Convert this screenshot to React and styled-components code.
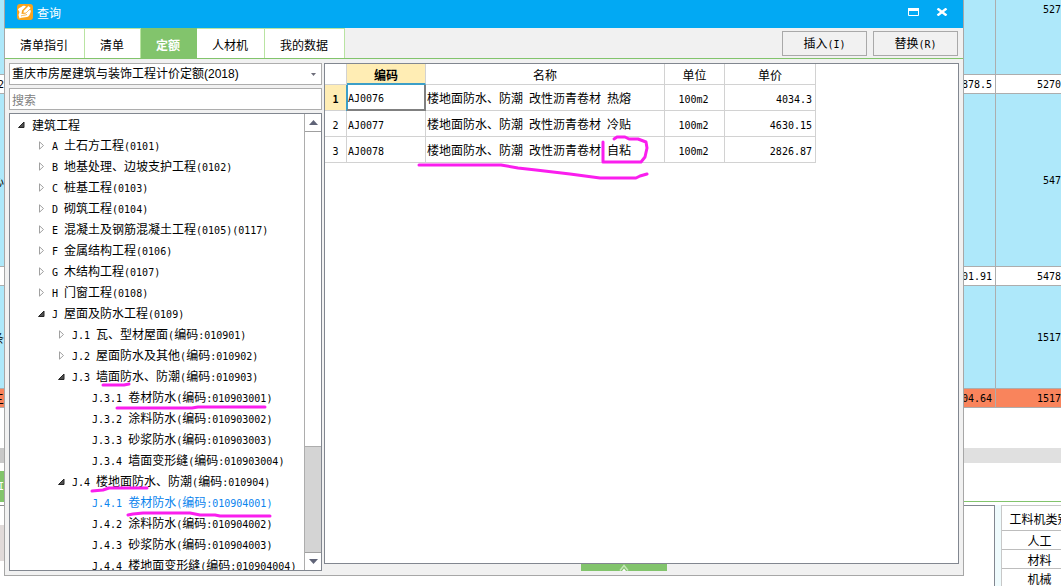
import React from "react";
import styled, { createGlobalStyle, css } from "styled-components";

const CJK = `"Noto Sans CJK SC", sans-serif`;
const HALF = `"DejaVu Sans Mono", "Liberation Mono", monospace`;

const GlobalStyle = createGlobalStyle`
  * { box-sizing: border-box; }
  body { margin: 0; background: #fff; color: #000; font: 12px/16px ${CJK}; }
  button, input, select { font: inherit; color: inherit; }
`;

const Half = styled.span`
  font-family: ${HALF};
  font-size: 10px;
  white-space: pre;
`;

/* Latin letters and digits take half the width of a Chinese character. */
function Text({ children }) {
  return String(children)
    .split(/([\x20-\x7e]+)/)
    .filter(Boolean)
    .map((part, i) => (/^[\x20-\x7e]/.test(part) ? <Half key={i}>{part}</Half> : part));
}

const Page = styled.div`
  position: relative;
  display: grid;
  grid-template-columns: 4px minmax(0, 1fr) 97px;
  height: 100vh;
  overflow: hidden;
`;

/* ---------- worksheet behind the dialog ---------- */

const Side = styled.div`
  display: flex;
  flex-direction: column;
  min-width: 0;
  overflow: hidden;
`;

const Sheet = styled.table`
  width: 100%;
  table-layout: fixed;
  border-collapse: separate;
  border-spacing: 0;
`;

const tones = { blue: "#aee8fa", white: "#fff", orange: "#f9845c" };

const SheetRow = styled.tr`
  height: ${(p) => p.$h}px;
  background: ${(p) => tones[p.$tone]};
`;

const SheetCell = styled.td`
  padding: 2px 0 0;
  border-bottom: 1px solid #adadad;
  vertical-align: ${(p) => (p.$top ? "top" : "middle")};
  &:not(:last-child) { border-right: 1px solid #adadad; }
`;

const Clip = styled.div`
  display: flex;
  justify-content: flex-end;
  padding-right: ${(p) => p.$pad || 0}px;
  overflow: hidden;
  white-space: nowrap;
`;

const Band = styled.div`
  flex: none;
  height: ${(p) => p.$h}px;
  background: ${(p) => p.$color || "#fff"};
`;

const GreenTag = styled(Band)`
  display: flex;
  align-items: center;
  justify-content: flex-end;
  color: #fff;
  overflow: hidden;
`;

const Lower = styled.div`
  flex: 1;
  display: grid;
  grid-template-columns: 31px minmax(0, 1fr);
  gap: 6px;
  margin-top: 3px;
  background: #effbfd;
`;

const LowerPane = styled.div`
  border-top: 1px solid #828790;
  border-right: 1px solid #828790;
  background: #fff;
`;

const KindTable = styled.table`
  align-self: start;
  width: 76px;
  border-collapse: separate;
  border-spacing: 0;
  background: #fff;
  border-left: 1px solid #c8c8c8;
  border-top: 1px solid #c8c8c8;
  th, td {
    height: 19px;
    padding: 2px 0 0;
    text-align: center;
    font-weight: 400;
    white-space: nowrap;
    border-bottom: 1px solid #bdbdbd;
  }
  th { height: 25px; }
`;

const rows = [
  { h: 75, tone: "blue", a: "", b: "527", left: "", top: true },
  { h: 19, tone: "white", a: "878.5", b: "5270", left: "2" },
  { h: 173, tone: "blue", a: "", b: "547", left: "心" },
  { h: 19, tone: "white", a: "01.91", b: "5478", left: "" },
  { h: 103, tone: "blue", a: "", b: "1517", left: "条" },
  { h: 19, tone: "orange", a: "04.64", b: "1517", left: "三" },
];

function LeftSheet() {
  return (
    <Side>
      <Sheet>
        <tbody>
          {rows.map((r, i) => (
            <SheetRow key={i} $h={r.h} $tone={r.tone}>
              <SheetCell><Clip><Text>{r.left}</Text></Clip></SheetCell>
            </SheetRow>
          ))}
        </tbody>
      </Sheet>
      <Band $h={40} />
      <Band $h={15} $color="#c8c8c8" />
      <Band $h={8} />
      <GreenTag $h={31} $color="#82c46c"><Text>I</Text></GreenTag>
      <Band $h={3} />
      <Band $h={1} $color="#8c8c8c" />
      <Band $h={19} />
      <Band $h={36} $color="#e0dad9" />
    </Side>
  );
}

function RightSheet() {
  return (
    <Side>
      <Sheet>
        <colgroup><col style={{ width: 32 }} /><col /></colgroup>
        <tbody>
          {rows.map((r, i) => (
            <SheetRow key={i} $h={r.h} $tone={r.tone}>
              <SheetCell $top={r.top}><Clip $pad={3}><Text>{r.a}</Text></Clip></SheetCell>
              <SheetCell $top={r.top}><Clip><Text>{r.b}</Text></Clip></SheetCell>
            </SheetRow>
          ))}
        </tbody>
      </Sheet>
      <Band $h={40} />
      <Band $h={15} $color="#e0e0e0" />
      <Band $h={38} />
      <Band $h={1} $color="#82c46c" />
      <Lower>
        <LowerPane />
        <KindTable>
          <thead><tr><th>工料机类别</th></tr></thead>
          <tbody>
            <tr><td>人工</td></tr>
            <tr><td>材料</td></tr>
            <tr><td>机械</td></tr>
          </tbody>
        </KindTable>
      </Lower>
    </Side>
  );
}

/* ---------- dialog ---------- */

const Dialog = styled.section`
  display: flex;
  flex-direction: column;
  height: calc(100vh - 10px);
  min-width: 0;
  border: 1px solid #a7a7a7;
  border-top: 0;
  background: #f1f1f1;
`;

const TitleBar = styled.header`
  flex: none;
  display: flex;
  align-items: center;
  height: 28px;
  padding: 0 15px 4px 12px;
  background: #02a9f3;
  color: #fff;
`;

const Title = styled.h1`
  flex: 1;
  margin: 0 0 0 4px;
  padding-top: 2px;
  font-size: 12px;
  font-weight: 400;
`;

const TitleButton = styled.button`
  display: flex;
  margin-left: 17px;
  padding: 0;
  border: 0;
  background: none;
`;

const TabBar = styled.div`
  flex: none;
  display: flex;
  align-items: center;
  height: 31px;
  padding-right: 5px;
  border-bottom: 1px solid #82c46c;
`;

const Tabs = styled.nav`
  display: flex;
  flex: 1;
  align-self: stretch;
`;

const Tab = styled.button`
  padding: 2px 16px 0 15px;
  border: 0;
  border-top: 1px solid #b9e4a2;
  border-right: 1px solid #b9e4a2;
  background: #fff;
  ${(p) => p.$active && css`
    background: #82c46c;
    border-color: #82c46c;
    color: #fff;
    font-weight: 700;
  `}
`;

const ActionButton = styled.button`
  width: 85px;
  height: 25px;
  margin-left: 6px;
  padding: 2px 0 0;
  border: 1px solid #a9a9a9;
  background: #f1f1f1;
`;

const Body = styled.div`
  flex: 1;
  display: grid;
  grid-template-columns: 313px minmax(0, 1fr);
  gap: 2px;
  min-height: 0;
  padding: 4px;
`;

const LeftPane = styled.div`
  display: flex;
  flex-direction: column;
  gap: 3px;
  min-height: 0;
`;

const ComboBox = styled.label`
  flex: none;
  display: flex;
  align-items: center;
  height: 22px;
  padding-right: 5px;
  border: 1px solid #adadad;
  background: #fff;
`;

const Combo = styled.select`
  flex: 1;
  min-width: 0;
  height: 20px;
  padding: 0 2px;
  border: 0;
  appearance: none;
  background: none;
  font-family: "Liberation Sans", ${CJK};
`;

const Search = styled.input`
  flex: none;
  height: 22px;
  padding: 0 2px;
  border: 1px solid #adadad;
  background: #fff;
  &::placeholder { color: #808080; opacity: 1; }
`;

const TreeBox = styled.div`
  flex: 1;
  display: flex;
  min-height: 0;
  border: 1px solid #828790;
  background: #fff;
`;

const Tree = styled.ul`
  flex: 1;
  margin: 0;
  padding: 0;
  overflow: hidden;
  list-style: none;
`;

const TreeItem = styled.li`
  display: flex;
  align-items: center;
  height: 21px;
  padding-left: ${(p) => 8 + 20 * p.$level}px;
  color: ${(p) => (p.$selected ? "#0a84ee" : "#000")};
  white-space: nowrap;
`;

const Toggle = styled.button`
  display: flex;
  flex: none;
  width: 14px;
  padding: 0;
  border: 0;
  background: none;
`;

const ToggleSpace = styled.span`
  flex: none;
  width: 14px;
`;

const ScrollBar = styled.div`
  flex: none;
  display: flex;
  flex-direction: column;
  width: 17px;
  border-left: 1px solid #adadad;
  background: #d4d4d4;
`;

const ScrollButton = styled.button`
  flex: none;
  display: flex;
  align-items: center;
  justify-content: center;
  height: 18px;
  padding: 0;
  border: 0;
  border-${(p) => p.$edge}: 1px solid #a0a0a0;
  background: #fff;
`;

const Track = styled.div`
  flex: 1;
`;

const Thumb = styled.div`
  height: 75%;
  border-bottom: 1px solid #adadad;
  background: #fff;
`;

const RightPane = styled.div`
  display: flex;
  flex-direction: column;
  min-width: 0;
`;

const GridBox = styled.div`
  flex: 1;
  border: 1px solid #828790;
  background: #fff;
`;

const Collapse = styled.button`
  display: flex;
  align-items: center;
  justify-content: center;
  align-self: center;
  width: 86px;
  height: 7px;
  margin-right: 35px;
  padding: 0;
  border: 0;
  background: #82c46c;
`;

const QuotaTable = styled.table`
  table-layout: fixed;
  width: 491px;
  border-collapse: separate;
  border-spacing: 0;
`;

const HeadCell = styled.th`
  height: 21px;
  padding: 2px 0 0;
  border-right: 1px solid #d2d2d2;
  border-bottom: 1px solid #d2d2d2;
  font-weight: 400;
  ${(p) => p.$active && css`
    background: #ffedb4;
    border-bottom: 2px solid #3c9fc8;
    font-weight: 700;
  `}
`;

const RowHead = styled.th`
  padding: 2px 0 0;
  border-right: 1px solid #d2d2d2;
  border-bottom: 1px solid #d2d2d2;
  font-weight: ${(p) => (p.$active ? 700 : 400)};
  background: ${(p) => (p.$active ? "#ffedb4" : "#fff")};
`;

const Cell = styled.td`
  height: 26px;
  padding: 2px 3px 0 1px;
  border-right: 1px solid #d2d2d2;
  border-bottom: 1px solid #d2d2d2;
  text-align: ${(p) => p.$align || "left"};
  white-space: nowrap;
  ${(p) => p.$active && css`
    border-right: 2px solid #808080;
    border-bottom: 2px solid #808080;
    box-shadow: -1px 0 0 #3c9fc8, inset 1px 0 0 #3c9fc8;
  `}
`;

const Ink = styled.svg`
  position: absolute;
  left: 0;
  top: 0;
  pointer-events: none;
`;

const tree = [
  [0, "open", "建筑工程"],
  [1, "closed", "A 土石方工程(0101)"],
  [1, "closed", "B 地基处理、边坡支护工程(0102)"],
  [1, "closed", "C 桩基工程(0103)"],
  [1, "closed", "D 砌筑工程(0104)"],
  [1, "closed", "E 混凝土及钢筋混凝土工程(0105)(0117)"],
  [1, "closed", "F 金属结构工程(0106)"],
  [1, "closed", "G 木结构工程(0107)"],
  [1, "closed", "H 门窗工程(0108)"],
  [1, "open", "J 屋面及防水工程(0109)"],
  [2, "closed", "J.1 瓦、型材屋面(编码:010901)"],
  [2, "closed", "J.2 屋面防水及其他(编码:010902)"],
  [2, "open", "J.3 墙面防水、防潮(编码:010903)"],
  [3, "", "J.3.1 卷材防水(编码:010903001)"],
  [3, "", "J.3.2 涂料防水(编码:010903002)"],
  [3, "", "J.3.3 砂浆防水(编码:010903003)"],
  [3, "", "J.3.4 墙面变形缝(编码:010903004)"],
  [2, "open", "J.4 楼地面防水、防潮(编码:010904)"],
  [3, "", "J.4.1 卷材防水(编码:010904001)", true],
  [3, "", "J.4.2 涂料防水(编码:010904002)"],
  [3, "", "J.4.3 砂浆防水(编码:010904003)"],
  [3, "", "J.4.4 楼地面变形缝(编码:010904004)"],
];

const quotas = [
  ["AJ0076", "楼地面防水、防潮 改性沥青卷材 热熔", "100m2", "4034.3"],
  ["AJ0077", "楼地面防水、防潮 改性沥青卷材 冷贴", "100m2", "4630.15"],
  ["AJ0078", "楼地面防水、防潮 改性沥青卷材 自粘", "100m2", "2826.87"],
];

const tabs = ["清单指引", "清单", "定额", "人材机", "我的数据"];

function AppIcon() {
  return (
    <svg width="16" height="16" viewBox="0 0 16 16" aria-hidden="true">
      <rect width="16" height="16" rx="3" fill="#f8a31c" />
      <path d="M1 5.500C2 3.500 4 3.500 5.500 2 7 1.500 8 1.500 9 2.500L5 6.500 4.500 10 8.500 9.500 12 6 14 6.500C13.500 9 12.500 12.500 10 13 7.500 13.500 5 13 2.500 14.500L1.500 11 2.500 8Z" fill="#fff" />
      <path d="M6 9 6.500 6.800 11.500 1.800 14 4 9 9Z" fill="#fff" stroke="#f8a31c" strokeWidth=".6" />
      <path d="M4 12C6 11 7.500 11.500 10 10.500" fill="none" stroke="#f8a31c" strokeWidth=".8" />
    </svg>
  );
}

function Arrow({ open }) {
  return open ? (
    <svg width="7" height="8" viewBox="0 0 7 8" aria-hidden="true">
      <path d="M6 1V6.500H.5Z" fill="#505050" stroke="#262626" strokeWidth="1" />
    </svg>
  ) : (
    <svg width="7" height="9" viewBox="0 0 7 9" aria-hidden="true">
      <path d="M1.500.8V8.200L5.500 4.500Z" fill="#fff" stroke="#a0a0a0" strokeWidth="1" />
    </svg>
  );
}

export default function App() {
  return (
    <Page>
      <GlobalStyle />
      <LeftSheet />
      <Dialog aria-label="查询">
        <TitleBar>
          <AppIcon />
          <Title>查询</Title>
          <TitleButton aria-label="最大化">
            <svg width="11" height="8" viewBox="0 0 11 8"><path d="M.5.500H10.500V7.500H.5Z" fill="none" stroke="#fff" /><path d="M0 0H11V3H0Z" fill="#fff" /></svg>
          </TitleButton>
          <TitleButton aria-label="关闭">
            <svg width="12" height="8" viewBox="0 0 12 8"><path d="M1.500.5 10.500 7.500M10.500.5 1.500 7.500" stroke="#fff" strokeWidth="2.400" /></svg>
          </TitleButton>
        </TitleBar>
        <TabBar>
          <Tabs>
            {tabs.map((t) => <Tab key={t} $active={t === "定额"}>{t}</Tab>)}
          </Tabs>
          <ActionButton><Text>插入(I)</Text></ActionButton>
          <ActionButton><Text>替换(R)</Text></ActionButton>
        </TabBar>
        <Body>
          <LeftPane>
            <ComboBox>
              <Combo aria-label="定额库">
                <option>重庆市房屋建筑与装饰工程计价定额(2018)</option>
              </Combo>
              <svg width="5" height="3" viewBox="0 0 5 3" aria-hidden="true"><path d="M0 0H5L2.500 3Z" fill="#6d6d7a" /></svg>
            </ComboBox>
            <Search type="text" placeholder="搜索" aria-label="搜索" />
            <TreeBox>
              <Tree>
                {tree.map(([level, state, label, selected]) => (
                  <TreeItem key={label} $level={level} $selected={selected}>
                    {state ? (
                      <Toggle aria-label={label} aria-expanded={state === "open"}><Arrow open={state === "open"} /></Toggle>
                    ) : <ToggleSpace />}
                    <span><Text>{label}</Text></span>
                  </TreeItem>
                ))}
              </Tree>
              <ScrollBar>
                <ScrollButton $edge="bottom" aria-label="向上">
                  <svg width="9" height="5" viewBox="0 0 9 5"><path d="M0 5 4.500 0 9 5Z" fill="#606478" /></svg>
                </ScrollButton>
                <Track><Thumb /></Track>
                <ScrollButton $edge="top" aria-label="向下">
                  <svg width="9" height="5" viewBox="0 0 9 5"><path d="M0 0H9L4.500 5Z" fill="#606478" /></svg>
                </ScrollButton>
              </ScrollBar>
            </TreeBox>
          </LeftPane>
          <RightPane>
            <GridBox>
              <QuotaTable>
                <colgroup>
                  {[22, 79, 239, 60, 91].map((w, i) => <col key={i} style={{ width: w }} />)}
                </colgroup>
                <thead>
                  <tr>
                    <HeadCell />
                    <HeadCell $active>编码</HeadCell>
                    <HeadCell>名称</HeadCell>
                    <HeadCell>单位</HeadCell>
                    <HeadCell>单价</HeadCell>
                  </tr>
                </thead>
                <tbody>
                  {quotas.map(([code, name, unit, price], i) => (
                    <tr key={code}>
                      <RowHead $active={i === 0}><Text>{i + 1}</Text></RowHead>
                      <Cell $active={i === 0}><Text>{code}</Text></Cell>
                      <Cell><Text>{name}</Text></Cell>
                      <Cell $align="center"><Text>{unit}</Text></Cell>
                      <Cell $align="right"><Text>{price}</Text></Cell>
                    </tr>
                  ))}
                </tbody>
              </QuotaTable>
            </GridBox>
            <Collapse aria-label="展开">
              <svg width="10" height="7" viewBox="0 0 10 7"><path d="M1 6.500 5 1.500 9 6.500" fill="none" stroke="#c5e6b8" strokeWidth="1.500" /><path d="M3 7 5 4.500 7 7Z" fill="#fff" /></svg>
            </Collapse>
          </RightPane>
        </Body>
      </Dialog>
      <RightSheet />
      <Ink width="700" height="540" viewBox="0 0 700 540" fill="none" stroke="#fa1eee" strokeWidth="3" strokeLinecap="round" strokeLinejoin="round" aria-hidden="true">
        <path d="M103 385H124L129 384" />
        <path d="M117 408H192L198 407H265" />
        <path d="M92 491 103 490 109 488H147" />
        <path d="M128 515 133 514 143 513H190L200 515H215L220 516H270" />
        <path d="M419 165H501L518 168 536 170 570 174 600 178H636L640 176 647 174" />
        <path d="M603 142V162H641L645 157 647 148 646 142 638 139H629L625 137H617L614 139" />
      </Ink>
    </Page>
  );
}
